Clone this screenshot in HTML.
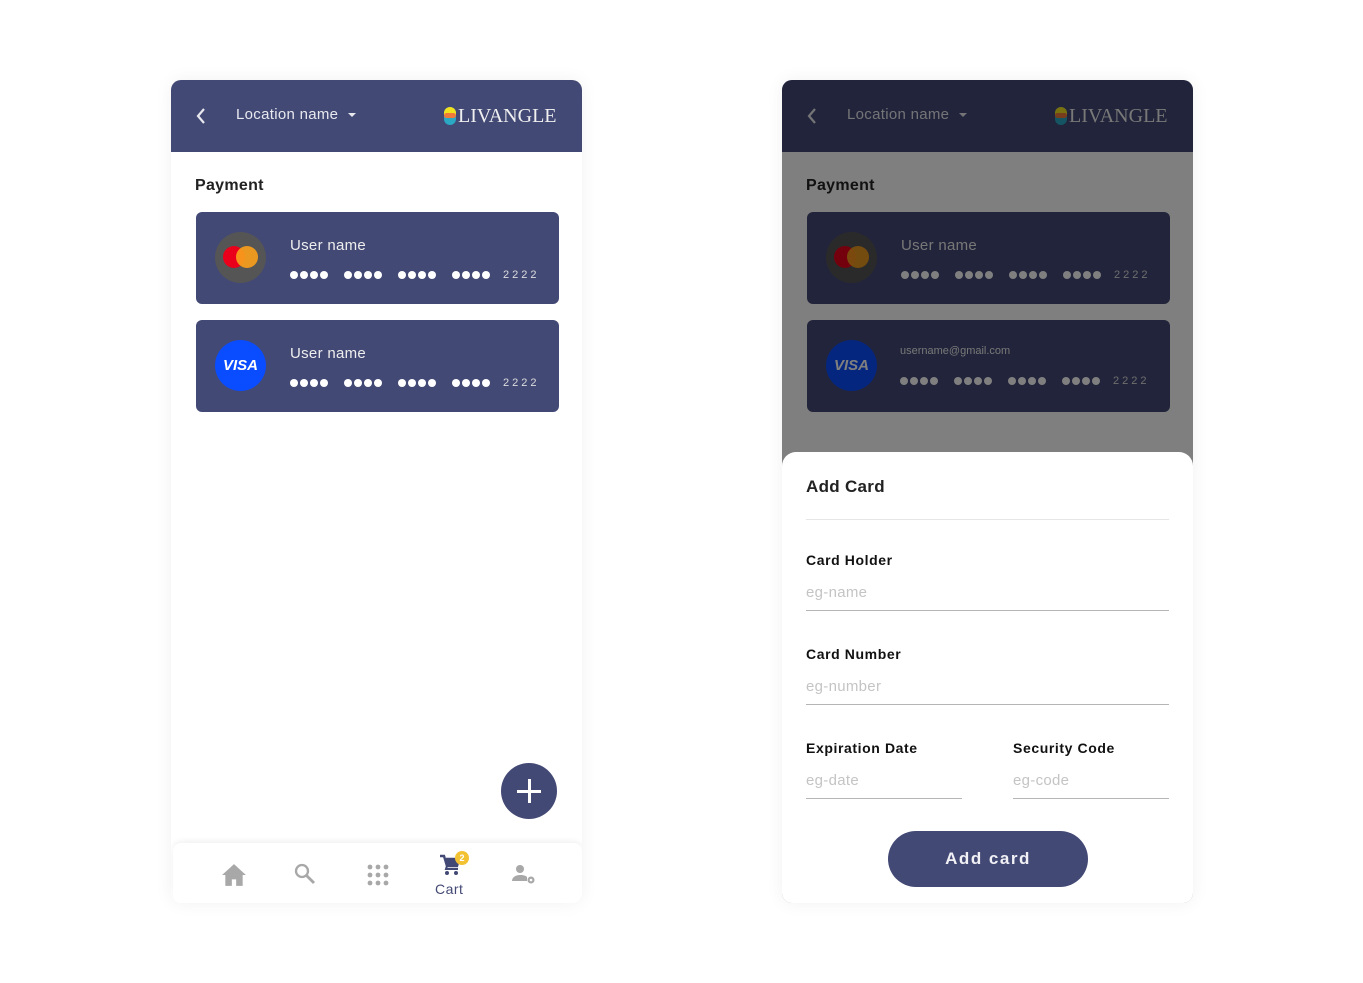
<!DOCTYPE html>
<html><head><meta charset="utf-8"><style>
*{margin:0;padding:0;box-sizing:border-box}
body{width:1363px;height:983px;background:#fff;font-family:"Liberation Sans",sans-serif;position:relative;overflow:hidden}
.ph{position:absolute;top:80px;width:411px;height:823px;background:#fff;border-radius:10px;overflow:hidden;box-shadow:0 0 18px rgba(0,0,0,0.06)}
.hd{position:absolute;left:0;top:0;width:411px;height:72px;background:#434975}
.back{position:absolute;left:24px;top:28px}
.loc{position:absolute;left:65px;top:26px;color:#e8e8ef;font-size:15px;letter-spacing:.3px}
.loc:after{content:"";display:inline-block;margin-left:10px;vertical-align:middle;border-left:4px solid transparent;border-right:4px solid transparent;border-top:4px solid #e8e8ef}
.logo{position:absolute;left:273px;top:25px;color:#f0f0f0;font-family:"Liberation Serif",serif;font-size:20px;letter-spacing:0}
.logo i{position:absolute;left:0;top:2px;width:12px;height:18px;border-radius:6px;overflow:hidden;background:#2aa8c4}
.logo i:before{content:"";position:absolute;left:0;top:0;width:12px;height:8px;background:#f2e21e}
.logo i:after{content:"";position:absolute;left:0;top:6px;width:12px;height:5px;border-radius:6px;background:#f07a3a}
.logo span{margin-left:14px}
.pt{position:absolute;left:24px;top:97px;font-weight:bold;font-size:16px;color:#222;letter-spacing:.3px}
.card{position:absolute;left:25px;width:363px;height:92px;background:#434975;border-radius:6px}
.ic{position:absolute;left:19px;top:20px;width:51px;height:51px;border-radius:50%}
.un{position:absolute;left:94px;top:25px;color:#eee;font-size:15px;letter-spacing:.3px}
.dots{position:absolute;left:94px;top:57px;display:flex;align-items:center}
.g{display:flex;gap:2px;margin-right:16px}
.g b{width:8px;height:8px;border-radius:50%;background:#fff}
.num{color:#ddd;font-size:11px;letter-spacing:3px;margin-left:-3px}
.ov{position:absolute;inset:0;background:rgba(0,0,0,0.5)}
</style></head><body>

<!-- left phone -->
<div class="ph" style="left:171px">
 <div class="hd">
  <svg class="back" width="12" height="16" viewBox="0 0 12 16"><path d="M9 1L3 8l6 7" stroke="#e8e8ef" stroke-width="2.2" fill="none"/></svg>
  <div class="loc">Location name</div>
  <div class="logo"><i></i><span>LIVANGLE</span></div>
 </div>
 <div class="pt">Payment</div>
 <div class="card" style="top:132px">
  <div class="ic" style="background:#555">
   <div style="position:absolute;left:8px;top:14px;width:22px;height:22px;border-radius:50%;background:#eb001b"></div>
   <div style="position:absolute;left:21px;top:14px;width:22px;height:22px;border-radius:50%;background:#f79e1b;opacity:.92"></div>
  </div>
  <div class="un">User name</div>
  <div class="dots"><div class="g"><b></b><b></b><b></b><b></b></div><div class="g"><b></b><b></b><b></b><b></b></div><div class="g"><b></b><b></b><b></b><b></b></div><div class="g"><b></b><b></b><b></b><b></b></div><span class="num">2222</span></div>
 </div>
 <div class="card" style="top:240px">
  <div class="ic" style="background:#0a4cff"><div style="position:absolute;left:0;right:0;top:17px;text-align:center;color:#fff;font-weight:bold;font-style:italic;font-size:15px">VISA</div></div>
  <div class="un">User name</div>
  <div class="dots"><div class="g"><b></b><b></b><b></b><b></b></div><div class="g"><b></b><b></b><b></b><b></b></div><div class="g"><b></b><b></b><b></b><b></b></div><div class="g"><b></b><b></b><b></b><b></b></div><span class="num">2222</span></div>
 </div>
 <div style="position:absolute;left:330px;top:683px;width:56px;height:56px;border-radius:50%;background:#434975">
  <div style="position:absolute;left:16px;top:27px;width:24px;height:2.5px;background:#fff"></div>
  <div style="position:absolute;left:27px;top:16px;width:2.5px;height:24px;background:#fff"></div>
 </div>
 <div style="position:absolute;left:2px;top:763px;width:409px;height:60px;background:#fff;border-radius:8px;box-shadow:0 -2px 6px rgba(0,0,0,0.06)">
  <svg style="position:absolute;left:48px;top:20px" width="26" height="24" viewBox="0 0 24 22"><path d="M12 1L1 11h3v10h6v-6h4v6h6V11h3z" fill="#a8a8a8"/></svg>
  <svg style="position:absolute;left:121px;top:20px" width="22" height="22" viewBox="0 0 22 22"><circle cx="8" cy="8" r="6" stroke="#a8a8a8" stroke-width="2.3" fill="none"/><path d="M12.5 12.5L20 20" stroke="#a8a8a8" stroke-width="2.8"/></svg>
  <svg style="position:absolute;left:194px;top:21px" width="22" height="22" viewBox="0 0 22 22" fill="#a8a8a8"><circle cx="3" cy="3" r="2.4"/><circle cx="11" cy="3" r="2.4"/><circle cx="19" cy="3" r="2.4"/><circle cx="3" cy="11" r="2.4"/><circle cx="11" cy="11" r="2.4"/><circle cx="19" cy="11" r="2.4"/><circle cx="3" cy="19" r="2.4"/><circle cx="11" cy="19" r="2.4"/><circle cx="19" cy="19" r="2.4"/></svg>
  <svg style="position:absolute;left:267px;top:11px" width="20" height="22" viewBox="0 0 20 22"><path d="M0 2h4l3 10h10l2-7H6" stroke="#434975" stroke-width="2.4" fill="none"/><rect x="6" y="6" width="12" height="6" fill="#434975"/><path d="M7 12l-1 3h12" stroke="#434975" stroke-width="2" fill="none"/><circle cx="7" cy="19" r="2" fill="#434975"/><circle cx="16" cy="19" r="2" fill="#434975"/></svg>
  <div style="position:absolute;left:282px;top:8px;width:14px;height:14px;border-radius:50%;background:#f3c233;color:#fff;font-size:9px;font-weight:bold;text-align:center;line-height:14px">2</div>
  <div style="position:absolute;left:262px;top:38px;color:#434975;font-size:14px;letter-spacing:.5px">Cart</div>
  <svg style="position:absolute;left:338px;top:21px" width="26" height="22" viewBox="0 0 26 22" fill="#a8a8a8"><circle cx="9" cy="5" r="4"/><path d="M1 17c0-4 4-6 8-6s6 1 7 2v4z"/><circle cx="20" cy="16" r="3.5"/><circle cx="20" cy="16" r="1.3" fill="#fff"/></svg>
 </div>
</div>

<!-- right phone -->
<div class="ph" style="left:782px">
 <div class="hd">
  <svg class="back" width="12" height="16" viewBox="0 0 12 16"><path d="M9 1L3 8l6 7" stroke="#e8e8ef" stroke-width="2.2" fill="none"/></svg>
  <div class="loc">Location name</div>
  <div class="logo"><i></i><span>LIVANGLE</span></div>
 </div>
 <div class="pt">Payment</div>
 <div class="card" style="top:132px">
  <div class="ic" style="background:#555">
   <div style="position:absolute;left:8px;top:14px;width:22px;height:22px;border-radius:50%;background:#eb001b"></div>
   <div style="position:absolute;left:21px;top:14px;width:22px;height:22px;border-radius:50%;background:#f79e1b;opacity:.92"></div>
  </div>
  <div class="un">User name</div>
  <div class="dots"><div class="g"><b></b><b></b><b></b><b></b></div><div class="g"><b></b><b></b><b></b><b></b></div><div class="g"><b></b><b></b><b></b><b></b></div><div class="g"><b></b><b></b><b></b><b></b></div><span class="num">2222</span></div>
 </div>
 <div class="card" style="top:240px">
  <div class="ic" style="background:#0a4cff"><div style="position:absolute;left:0;right:0;top:17px;text-align:center;color:#fff;font-weight:bold;font-style:italic;font-size:15px">VISA</div></div>
  <div class="un" style="top:25px;font-size:11px;left:93px;letter-spacing:0">username@gmail.com</div>
  <div class="dots" style="top:55px;left:93px"><div class="g"><b></b><b></b><b></b><b></b></div><div class="g"><b></b><b></b><b></b><b></b></div><div class="g"><b></b><b></b><b></b><b></b></div><div class="g"><b></b><b></b><b></b><b></b></div><span class="num">2222</span></div>
 </div>
 <div class="ov"></div>
 <div style="position:absolute;left:0;top:372px;width:411px;height:451px;background:#fff;border-radius:14px 14px 0 0">
  <div style="position:absolute;left:24px;top:25px;font-size:17px;font-weight:bold;color:#222;letter-spacing:.3px">Add Card</div>
  <div style="position:absolute;left:24px;top:67px;width:363px;height:1px;background:#e6e6e6"></div>
  <div style="position:absolute;left:24px;top:100px;font-size:14px;font-weight:bold;color:#111;letter-spacing:.6px">Card Holder</div>
  <div style="position:absolute;left:24px;top:132px;font-size:15px;color:#c4c4c4;letter-spacing:.3px">eg-name</div>
  <div style="position:absolute;left:24px;top:158px;width:363px;height:1px;background:#b5b5b5"></div>
  <div style="position:absolute;left:24px;top:194px;font-size:14px;font-weight:bold;color:#111;letter-spacing:.6px">Card Number</div>
  <div style="position:absolute;left:24px;top:226px;font-size:15px;color:#c4c4c4;letter-spacing:.3px">eg-number</div>
  <div style="position:absolute;left:24px;top:252px;width:363px;height:1px;background:#b5b5b5"></div>
  <div style="position:absolute;left:24px;top:288px;font-size:14px;font-weight:bold;color:#111;letter-spacing:.6px">Expiration Date</div>
  <div style="position:absolute;left:24px;top:320px;font-size:15px;color:#c4c4c4;letter-spacing:.3px">eg-date</div>
  <div style="position:absolute;left:24px;top:346px;width:156px;height:1px;background:#b5b5b5"></div>
  <div style="position:absolute;left:231px;top:288px;font-size:14px;font-weight:bold;color:#111;letter-spacing:.6px">Security Code</div>
  <div style="position:absolute;left:231px;top:320px;font-size:15px;color:#c4c4c4;letter-spacing:.3px">eg-code</div>
  <div style="position:absolute;left:231px;top:346px;width:156px;height:1px;background:#b5b5b5"></div>
  <div style="position:absolute;left:106px;top:379px;width:200px;height:56px;border-radius:28px;background:#434975;color:#f0f0f5;font-weight:bold;font-size:17px;letter-spacing:1.5px;text-align:center;line-height:56px">Add card</div>
 </div>
</div>
</body></html>
